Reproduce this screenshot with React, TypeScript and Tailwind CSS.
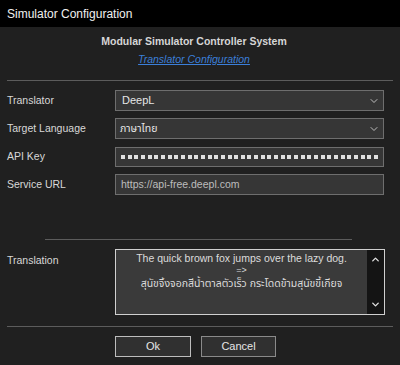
import { ChevronDown, ChevronUp } from 'lucide-react';

const font = { fontFamily: '"Liberation Sans", "Noto Sans Thai", "Noto Sans", Arial, sans-serif' };

function Row({ label, children }: { label: string; children: React.ReactNode }) {
  return (
    <div className="flex items-center h-[21px]">
      <div className="w-[108px] text-[10.5px] text-[#d8d8d8]">{label}</div>
      <div className="flex-1">{children}</div>
    </div>
  );
}

export default function App() {
  return (
    <div className="w-[400px] h-[365px] bg-[#202020] overflow-hidden" style={font}>
      {/* Title bar */}
      <div className="h-[27px] bg-black flex items-center px-[7px] text-[12px] text-[#f0f0f0]">
        Simulator Configuration
      </div>

      {/* Header */}
      <div className="flex flex-col items-center pt-[6px] pr-[12px]">
        <div className="text-[10.5px] font-bold text-[#d6d6d6] leading-[16px]">Modular Simulator Controller System</div>
        <a className="mt-[3px] text-[10.5px] italic underline text-[#3b7fd9] leading-[14px]">Translator Configuration</a>
      </div>

      <div className="mx-[7px] mt-[14px] h-px bg-[#5c5c5c]" />

      {/* Fields */}
      <div className="pl-[7px] pr-[16px] mt-[9px] flex flex-col gap-[7px]">
        <Row label="Translator">
          <div className="h-[21px] bg-[#363636] border border-[#6e6e6e] flex items-center justify-between pl-[6px] pr-[3px] text-[11px] text-[#e6e6e6]">
            DeepL
            <ChevronDown className="w-[12px] h-[12px] text-[#bdbdbd]" strokeWidth={2} />
          </div>
        </Row>
        <Row label="Target Language">
          <div className="h-[21px] bg-[#363636] border border-[#6e6e6e] flex items-center justify-between pl-[4px] pr-[3px] text-[10.5px] text-[#e6e6e6]">
            ภาษาไทย
            <ChevronDown className="w-[12px] h-[12px] text-[#bdbdbd]" strokeWidth={2} />
          </div>
        </Row>
        <Row label="API Key">
          <div className="h-[20px] bg-[#363636] border border-[#6e6e6e] flex items-center justify-between px-[5px] overflow-hidden">
            {Array.from({ length: 39 }).map((_, i) => (
              <span key={i} className="w-[4px] h-[4px] bg-[#e0e0e0] shrink-0" />
            ))}
          </div>
        </Row>
        <Row label="Service URL">
          <div className="h-[21px] bg-[#363636] border border-[#6e6e6e] flex items-center pl-[5px] text-[10.5px] text-[#bdbdbd]">
            https://api-free.deepl.com
          </div>
        </Row>
      </div>

      <div className="ml-[45px] mr-[48px] mt-[44px] h-px bg-[#5c5c5c]" />

      {/* Translation */}
      <div className="flex pl-[7px] pr-[15px] mt-[9px]">
        <div className="w-[108px] pt-[4px] text-[10.5px] text-[#d8d8d8]">Translation</div>
        <div className="flex-1 h-[66px] border border-[#d0d0d0] bg-[#3a3a3a] flex">
          <div className="flex-1 flex flex-col items-center pt-[2px] text-[10.5px] leading-[12px] text-[#dcdcdc]">
            <span>The quick brown fox jumps over the lazy dog.</span>
            <span className="text-[9px] leading-[12px]">=&gt;</span>
            <span className="leading-[14px]">สุนัขจิ้งจอกสีน้ำตาลตัวเร็ว กระโดดข้ามสุนัขขี้เกียจ</span>
          </div>
          <div className="w-[17px] bg-[#141414] flex flex-col justify-between items-center py-[4px]">
            <ChevronUp className="w-[11px] h-[11px] text-[#e0e0e0]" strokeWidth={3} />
            <ChevronDown className="w-[11px] h-[11px] text-[#e0e0e0]" strokeWidth={3} />
          </div>
        </div>
      </div>

      <div className="mx-[7px] mt-[11px] h-px bg-[#5c5c5c]" />

      {/* Buttons */}
      <div className="flex gap-[10px] pl-[115px] mt-[9px]">
        <button className="w-[76px] h-[21px] border border-[#bdbdbd] bg-[#303030] text-[11px] text-[#e6e6e6]">Ok</button>
        <button className="w-[75px] h-[21px] border border-[#8a8a8a] bg-[#303030] text-[11px] text-[#e6e6e6]">Cancel</button>
      </div>
    </div>
  );
}
